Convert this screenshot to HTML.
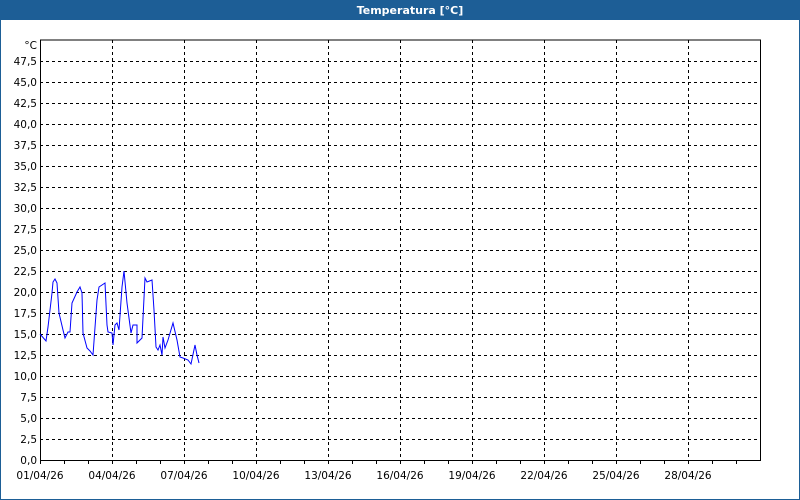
<!DOCTYPE html>
<html><head><meta charset="utf-8"><style>
html,body{margin:0;padding:0;width:800px;height:500px;overflow:hidden;background:#fff}
svg{display:block}
text{font-family:"DejaVu Sans","Liberation Sans",sans-serif;font-size:10.5px;fill:#000}
</style></head><body>
<svg width="800" height="500" xmlns="http://www.w3.org/2000/svg">
<rect x="0" y="0" width="800" height="500" fill="#1d5e96"/>
<rect x="1" y="20" width="798" height="479" fill="#fff"/>
<text x="410" y="14" text-anchor="middle" style="font-weight:bold;fill:#fff;font-size:11px">Temperatura [°C]</text>
<g stroke="#000" stroke-width="1" stroke-dasharray="3,3" fill="none">
<path d="M40 439.5H760M40 418.5H760M40 397.5H760M40 376.5H760M40 355.5H760M40 334.5H760M40 313.5H760M40 292.5H760M40 271.5H760M40 250.5H760M40 229.5H760M40 208.5H760M40 187.5H760M40 166.5H760M40 145.5H760M40 124.5H760M40 103.5H760M40 82.5H760M40 61.5H760"/>
<path d="M112.5 40V460M184.5 40V460M256.5 40V460M328.5 40V460M400.5 40V460M472.5 40V460M544.5 40V460M616.5 40V460M688.5 40V460"/>
</g>
<g stroke="#000" stroke-width="1" fill="none">
<path d="M40.5 40V460.5H760.5V40H40"/>
<path d="M64.5 460v4M88.5 460v4M112.5 460v4M136.5 460v4M160.5 460v4M184.5 460v4M208.5 460v4M232.5 460v4M256.5 460v4M280.5 460v4M304.5 460v4M328.5 460v4M352.5 460v4M376.5 460v4M400.5 460v4M424.5 460v4M448.5 460v4M472.5 460v4M496.5 460v4M520.5 460v4M544.5 460v4M568.5 460v4M592.5 460v4M616.5 460v4M640.5 460v4M664.5 460v4M688.5 460v4M712.5 460v4M736.5 460v4M40.5 460v4"/>
</g>
<g text-anchor="end">
<text x="37" y="464">0,0</text><text x="37" y="443">2,5</text><text x="37" y="422">5,0</text><text x="37" y="401">7,5</text>
<text x="37" y="380">10,0</text><text x="37" y="359">12,5</text><text x="37" y="338">15,0</text><text x="37" y="317">17,5</text>
<text x="37" y="296">20,0</text><text x="37" y="275">22,5</text><text x="37" y="254">25,0</text><text x="37" y="233">27,5</text>
<text x="37" y="212">30,0</text><text x="37" y="191">32,5</text><text x="37" y="170">35,0</text><text x="37" y="149">37,5</text>
<text x="37" y="128">40,0</text><text x="37" y="107">42,5</text><text x="37" y="86">45,0</text><text x="37" y="65">47,5</text>
<text x="37" y="49">°C</text>
</g>
<g text-anchor="middle">
<text x="40" y="479">01/04/26</text><text x="112" y="479">04/04/26</text><text x="184" y="479">07/04/26</text>
<text x="256" y="479">10/04/26</text><text x="328" y="479">13/04/26</text><text x="400" y="479">16/04/26</text>
<text x="472" y="479">19/04/26</text><text x="544" y="479">22/04/26</text><text x="616" y="479">25/04/26</text>
<text x="688" y="479">28/04/26</text>
</g>
<polyline fill="none" stroke="#0000ff" stroke-width="1" points="40,334 46,341 48,327 52,293 53,282 55,279 57,283 59,313 63,330 65,338 68,332 70,332 72,303 77,292 80,287 82,293 83,333 87,348 90,351 93,355 97,300 99,287 102,285 105,283 107,325 108,332 112,333 113,345 115,325 117,323 119,330 122,287 124,271 127,303 131,333 133,325 137,325 137,343 142,338 145,278 147,282 152,280 154,310 156,347 158,350 160,345 162,355 163,337 165,348 168,340 173,323 177,340 180,357 183,358 188,360 191,364 195,345 197,355 199,363"/>
</svg>
</body></html>
